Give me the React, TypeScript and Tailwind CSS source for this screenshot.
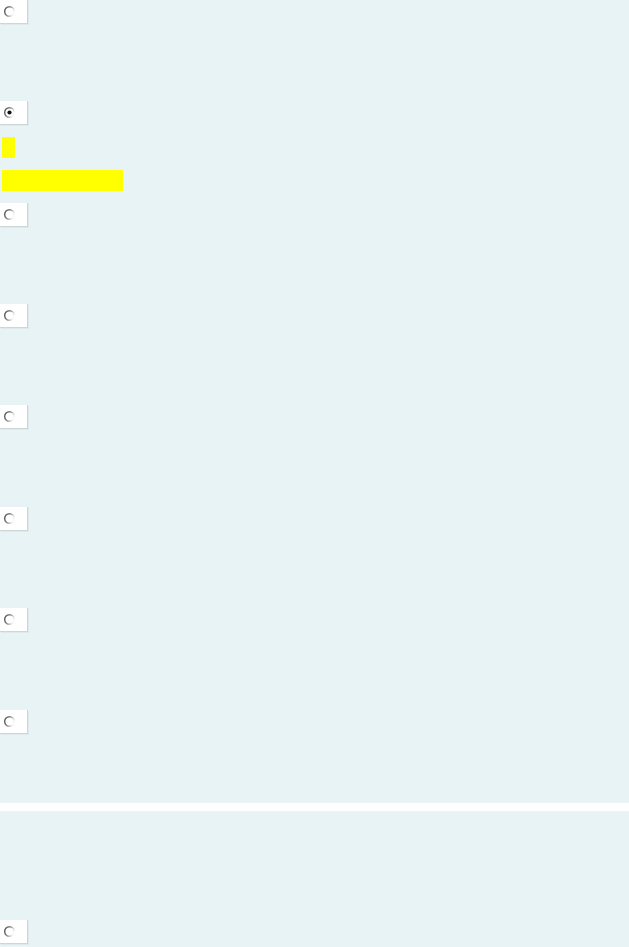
import React from "react";

function Radio({ checked = false }: { checked?: boolean }) {
  const id = checked ? "gc" : "gu";
  return (
    <div className="w-[28px] h-[24px] bg-white border-r border-b border-[#cfd6d8] shadow-[1px_1px_0_#dfe8ea] flex items-center pl-[3px]">
      <svg width="13" height="13" viewBox="0 0 13 13">
        <defs>
          <linearGradient id={id} x1="0" y1="0.3" x2="1" y2="0.7">
            <stop offset="0" stopColor="#555" />
            <stop offset="0.45" stopColor="#8a8a8a" />
            <stop offset="0.85" stopColor="#e8e8e8" />
            <stop offset="1" stopColor="#ffffff" />
          </linearGradient>
        </defs>
        <circle cx="6.5" cy="6.5" r="4.8" fill="#fff" stroke={`url(#${id})`} strokeWidth="1.4" />
        {checked && <circle cx="6.5" cy="6.5" r="2.1" fill="#111" />}
      </svg>
    </div>
  );
}

export default function App() {
  return (
    <div className="w-[629px] h-[947px] bg-[#e8f3f5] flex flex-col overflow-hidden">
      <div className="h-[101px]"><Radio /></div>
      <div className="h-[102px] flex flex-col">
        <Radio checked />
        <div className="ml-[2px] mt-[12px] w-[13px] h-[21px] bg-[#ffff00]" />
        <div className="ml-[2px] mt-[12px] w-[121px] h-[21px] bg-[#ffff00]" />
      </div>
      <div className="h-[101px]"><Radio /></div>
      <div className="h-[101px]"><Radio /></div>
      <div className="h-[102px]"><Radio /></div>
      <div className="h-[101px]"><Radio /></div>
      <div className="h-[102px]"><Radio /></div>
      <div className="h-[92px]"><Radio /></div>
      <div className="h-[10px] bg-[#fdfefe] border-y border-[#eef5f6]" />
      <div className="h-[108px]" />
      <div><Radio /></div>
    </div>
  );
}
